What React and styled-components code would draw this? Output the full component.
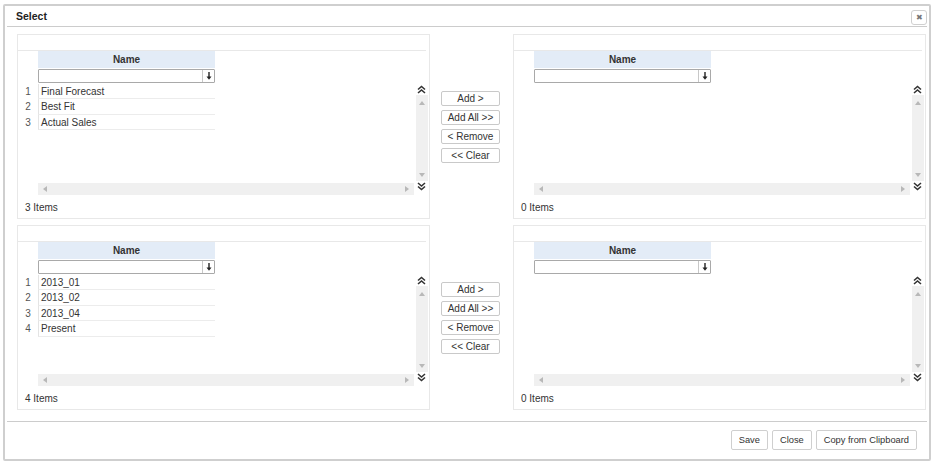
import React from "react";
import styled, { createGlobalStyle } from "styled-components";

const GlobalStyle = createGlobalStyle`
  html, body {
    margin: 0;
    padding: 0;
    background: #ffffff;
    font-family: "Liberation Sans", Arial, sans-serif;
    color: #333;
  }
`;

const DoubleUp = () => (
  <svg width="9" height="9" viewBox="0 0 9 9">
    <path d="M1 4.5 L4.5 1.5 L8 4.5" fill="none" stroke="#333" strokeWidth="1.6" />
    <path d="M1 8 L4.5 5 L8 8" fill="none" stroke="#333" strokeWidth="1.6" />
  </svg>
);

const DoubleDown = () => (
  <svg width="9" height="9" viewBox="0 0 9 9">
    <path d="M1 1 L4.5 4 L8 1" fill="none" stroke="#333" strokeWidth="1.6" />
    <path d="M1 4.5 L4.5 7.5 L8 4.5" fill="none" stroke="#333" strokeWidth="1.6" />
  </svg>
);

const DownArrow = () => (
  <svg width="6" height="8" viewBox="0 0 6 8">
    <path d="M3 0 V6" stroke="#222" strokeWidth="1.4" />
    <polygon points="0.5,4.5 5.5,4.5 3,7.8" fill="#222" />
  </svg>
);

const Tri = ({ dir }) => {
  const pts = {
    up: "0,4 3,0 6,4",
    down: "0,0 6,0 3,4",
    left: "4,0 4,6 0,3",
    right: "0,0 0,6 4,3",
  }[dir];
  const horiz = dir === "left" || dir === "right";
  return (
    <svg width={horiz ? 4 : 6} height={horiz ? 6 : 4} viewBox={horiz ? "0 0 4 6" : "0 0 6 4"}>
      <polygon points={pts} fill="#b8b8b8" />
    </svg>
  );
};

const ListPanel = ({ items }) => {
  return (
    <Panel>
      <TopBand />
      <GridBody>
        <GridCol>
          <HeaderRow>
            <IndexCell />
            <NameHeader>Name</NameHeader>
          </HeaderRow>
          <HeaderRow>
            <IndexCell />
            <FilterBox>
              <FilterInput />
              <FilterBtn>
                <DownArrow />
              </FilterBtn>
            </FilterBox>
          </HeaderRow>
          {items.map((it, i) => (
            <DataRow key={it}>
              <IndexCell>{i + 1}</IndexCell>
              <NameCell>{it}</NameCell>
            </DataRow>
          ))}
          <Spacer />
          <HScroll>
            <Tri dir="left" />
            <Tri dir="right" />
          </HScroll>
        </GridCol>
        <ScrollCol>
          <ChevronBox>
            <DoubleUp />
          </ChevronBox>
          <VScroll>
            <Tri dir="up" />
            <Tri dir="down" />
          </VScroll>
          <ChevronBox>
            <DoubleDown />
          </ChevronBox>
        </ScrollCol>
      </GridBody>
      <CountText>{items.length} Items</CountText>
    </Panel>
  );
};

const MoveButtons = () => (
  <MiddleCol>
    <SmallButton>Add &gt;</SmallButton>
    <SmallButton>Add All &gt;&gt;</SmallButton>
    <SmallButton>&lt; Remove</SmallButton>
    <SmallButton>&lt;&lt; Clear</SmallButton>
  </MiddleCol>
);

const App = () => {
  return (
    <>
      <GlobalStyle />
      <Page>
        <Dialog>
          <TitleBar>
            <Title>Select</Title>
            <CloseBtn>&#10006;</CloseBtn>
          </TitleBar>
          <Body>
            <ListPanel items={["Final Forecast", "Best Fit", "Actual Sales"]} />
            <MoveButtons />
            <ListPanel items={[]} />
            <ListPanel items={["2013_01", "2013_02", "2013_04", "Present"]} />
            <MoveButtons />
            <ListPanel items={[]} />
          </Body>
          <Footer>
            <FooterButton>Save</FooterButton>
            <FooterButton>Close</FooterButton>
            <FooterButton>Copy from Clipboard</FooterButton>
          </Footer>
        </Dialog>
      </Page>
    </>
  );
};

export default App;

const Page = styled.div`
  width: 934px;
  height: 461px;
  padding: 4px 0 0 3px;
  box-sizing: border-box;
`;

const Dialog = styled.div`
  width: 928px;
  height: 457px;
  box-sizing: border-box;
  border: 2px solid #cfcfcf;
  border-radius: 2px;
  background: #fff;
  display: flex;
  flex-direction: column;
`;

const TitleBar = styled.div`
  height: 20px;
  margin: 0 2px;
  padding: 0 0 0 9px;
  border-bottom: 1px solid #cccccc;
  display: flex;
  align-items: center;
  justify-content: space-between;
`;

const Title = styled.span`
  font-size: 10.5px;
  font-weight: bold;
  color: #222;
`;

const CloseBtn = styled.div`
  width: 16px;
  height: 15px;
  margin-top: 3px;
  box-sizing: border-box;
  border: 1px solid #d0d0d0;
  border-radius: 3px;
  display: flex;
  align-items: center;
  justify-content: center;
  font-size: 8px;
  color: #777;
`;

const Body = styled.div`
  display: grid;
  grid-template-columns: 413px 83px 413px;
  grid-template-rows: 185px 185px;
  row-gap: 6px;
  padding: 7px 0 0 10px;
  height: 395px;
  box-sizing: border-box;
  border-bottom: 1px solid #cccccc;
  margin: 0 2px;
`;

const Panel = styled.div`
  border: 1px solid #e8e8e8;
  box-sizing: border-box;
  display: flex;
  flex-direction: column;
`;

const TopBand = styled.div`
  height: 15px;
  margin-right: 3px;
  border-bottom: 1px solid #e8e8e8;
`;

const GridBody = styled.div`
  display: flex;
  height: 146px;
`;

const GridCol = styled.div`
  width: 396px;
  display: flex;
  flex-direction: column;
`;

const HeaderRow = styled.div`
  display: flex;
`;

const IndexCell = styled.div`
  width: 20px;
  flex-shrink: 0;
  font-size: 10px;
  color: #555;
  text-align: center;
  line-height: 15px;
`;

const NameHeader = styled.div`
  width: 177px;
  height: 17px;
  margin-bottom: 1px;
  background: #e3ecf7;
  font-size: 10px;
  font-weight: bold;
  color: #333;
  text-align: center;
  line-height: 17px;
`;

const FilterBox = styled.div`
  width: 177px;
  height: 14px;
  box-sizing: border-box;
  border: 1px solid #a9a9a9;
  border-radius: 1px;
  display: flex;
  margin-bottom: 1px;
`;

const FilterInput = styled.div`
  flex: 1;
`;

const FilterBtn = styled.div`
  width: 11px;
  border-left: 1px solid #c8c8c8;
  display: flex;
  align-items: center;
  justify-content: center;
`;

const DataRow = styled.div`
  display: flex;
  height: 15.5px;
`;

const NameCell = styled.div`
  width: 177px;
  box-sizing: border-box;
  border-left: 1px solid #e4e4e4;
  border-bottom: 1px solid #ececec;
  padding-left: 2px;
  font-size: 10px;
  line-height: 15px;
  color: #333;
`;

const Spacer = styled.div`
  flex: 1;
`;

const HScroll = styled.div`
  height: 12px;
  margin-left: 20px;
  background: #f0f0f0;
  display: flex;
  align-items: center;
  justify-content: space-between;
  padding: 0 5px;
`;

const ScrollCol = styled.div`
  width: 15px;
  display: flex;
  flex-direction: column;
  align-items: center;
  padding-top: 33px;
  box-sizing: border-box;
`;

const ChevronBox = styled.div`
  height: 11px;
  display: flex;
  align-items: center;
  justify-content: center;
`;

const VScroll = styled.div`
  width: 12px;
  height: 86px;
  background: #f0f0f0;
  display: flex;
  flex-direction: column;
  align-items: center;
  justify-content: space-between;
  padding: 6px 0 4px;
  box-sizing: border-box;
  margin-left: 1px;
`;

const CountText = styled.div`
  font-size: 10px;
  color: #333;
  padding: 3px 0 0 7px;
  line-height: 20px;
`;

const MiddleCol = styled.div`
  display: flex;
  flex-direction: column;
  gap: 4px;
  padding: 57px 0 0 11px;
`;

const SmallButton = styled.div`
  width: 59px;
  height: 15px;
  box-sizing: border-box;
  border: 1px solid #c9c9c9;
  border-radius: 2px;
  font-size: 10px;
  line-height: 13px;
  text-align: center;
  color: #333;
  background: #fff;
`;

const Footer = styled.div`
  flex: 1;
  display: flex;
  justify-content: flex-end;
  align-items: flex-start;
  gap: 4px;
  padding: 8px 12px 0 0;
`;

const FooterButton = styled.div`
  height: 20px;
  box-sizing: border-box;
  padding: 0 7px;
  border: 1px solid #cfcfcf;
  border-radius: 2px;
  font-size: 9.3px;
  line-height: 18px;
  color: #333;
  background: #fff;
`;
